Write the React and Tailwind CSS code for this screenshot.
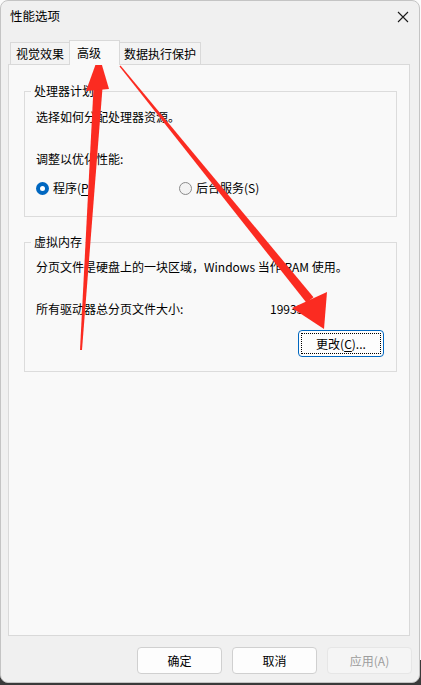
import React from 'react';

const font = { fontFamily: '"Microsoft YaHei UI", "Noto Sans CJK SC", "Noto Sans", sans-serif' };

const Tab = ({ label, active }) => (
    <div
        className={
            active
                ? 'relative z-10 -mb-px -ml-px h-[25px] w-[51px] border border-b-0 border-[#d9d9d9] bg-[#f9f9f9] pl-[7px] pt-[2px] leading-[20px]'
                : 'h-[22px] border border-b-0 border-[#d9d9d9] bg-[#f3f3f3] px-[4px] leading-[21px] -ml-px first:ml-0 first:px-[5px]'
        }
    >
        {label}
    </div>
);

const Radio = ({ checked, children }) => (
    <div className="flex items-center gap-[4px]">
        {checked ? (
            <span className="flex h-[13px] w-[13px] items-center justify-center rounded-full bg-[#0067c0]">
                <span className="h-[5px] w-[5px] rounded-full bg-white" />
            </span>
        ) : (
            <span className="h-[13px] w-[13px] rounded-full border border-[#8a8a8a] bg-[#f3f3f3]" />
        )}
        <span>{children}</span>
    </div>
);

const Group = ({ title, className, children }) => (
    <div className={`relative ml-[15px] w-[373px] border border-[#dcdcdc] ${className}`}>
        <span className="absolute -top-[10px] left-[6px] bg-[#f9f9f9] px-[3px] leading-[18px]">{title}</span>
        {children}
    </div>
);

const Button = ({ children, disabled }) => (
    <button
        className={
            disabled
                ? 'h-[27px] w-[85px] rounded-[4px] border border-[#e6e6e6] bg-[#f5f5f5] text-[#9d9d9d]'
                : 'h-[27px] w-[85px] rounded-[4px] border border-[#d0d0d0] bg-[#fdfdfd] text-black'
        }
    >
        {children}
    </button>
);

// red annotation arrows drawn over the dialog
const Arrows = () => (
    <svg className="pointer-events-none absolute inset-0" width="421" height="685" viewBox="0 0 421 685">
        <g fill="#fb2b21">
            <polygon points="80,350 82,350 102.5,88 93.5,88" />
            <polygon points="99,55 86,91 109,89" />
            <polygon points="120.5,65.6 119.5,66.4 306.5,302.8 313.5,297.2" />
            <polygon points="324,329 292,308 327,292" />
        </g>
    </svg>
);

export default function App() {
    return (
        <div
            className="relative h-[685px] w-[421px] overflow-hidden bg-[linear-gradient(to_bottom,#fbfbfb_660px,#3a3a3a_660px)] text-[12px] text-black"
            style={font}
        >
            <div className="flex h-[683px] w-[420px] flex-col rounded-[8px] border border-[#c4c4c4] bg-[#f0f0f0]">
                {/* Title bar */}
                <div className="flex h-[31px] items-center justify-between pl-[9px] pr-[9px]">
                    <span className="text-[12.5px]">性能选项</span>
                    <svg width="12" height="12" viewBox="0 0 12 12" className="mr-[1px]">
                        <path d="M1 1 L11 11 M11 1 L1 11" stroke="#1a1a1a" strokeWidth="1.1" />
                    </svg>
                </div>

                {/* Tabs */}
                <div className="mt-[8px] flex items-end pl-[9px]">
                    <Tab label="视觉效果" />
                    <Tab label="高级" active />
                    <Tab label="数据执行保护" />
                </div>

                {/* Tab panel */}
                <div className="ml-[7px] h-[572px] w-[402px] border border-[#d9d9d9] bg-[#f9f9f9]">
                    <Group title="处理器计划" className="mt-[26px] h-[126px] pl-[11px] pt-[15px]">
                        <div className="leading-[20px]">选择如何分配处理器资源。</div>
                        <div className="mt-[22px] leading-[20px]">调整以优化性能:</div>
                        <div className="mt-[9px] flex h-[20px] items-center">
                            <div className="w-[143px]">
                                <Radio checked>
                                    程序(<span className="underline underline-offset-2">P</span>)
                                </Radio>
                            </div>
                            <Radio>后台服务(S)</Radio>
                        </div>
                    </Group>

                    <Group title="虚拟内存" className="mt-[25px] h-[130px] pl-[11px] pt-[14px]">
                        <div className="leading-[20px]">分页文件是硬盘上的一块区域，Windows 当作 RAM 使用。</div>
                        <div className="mt-[22px] flex leading-[20px]">
                            <span className="w-[234px]">所有驱动器总分页文件大小:</span>
                            <span>19935 MB</span>
                        </div>
                        <div className="mt-[11px] flex justify-end pr-[12px]">
                            <button className="relative h-[27px] w-[86px] rounded-[4px] border border-[#0067c0] bg-[#fdfdfd]">
                                <span className="absolute inset-[2px] border border-dotted border-black" />
                                更改(<span className="underline underline-offset-2">C</span>)...
                            </button>
                        </div>
                    </Group>
                </div>

                {/* Bottom buttons */}
                <div className="mt-[11px] flex justify-end gap-[10px] pr-[7px]">
                    <Button>确定</Button>
                    <Button>取消</Button>
                    <Button disabled>应用(A)</Button>
                </div>
            </div>
            <Arrows />
        </div>
    );
}
